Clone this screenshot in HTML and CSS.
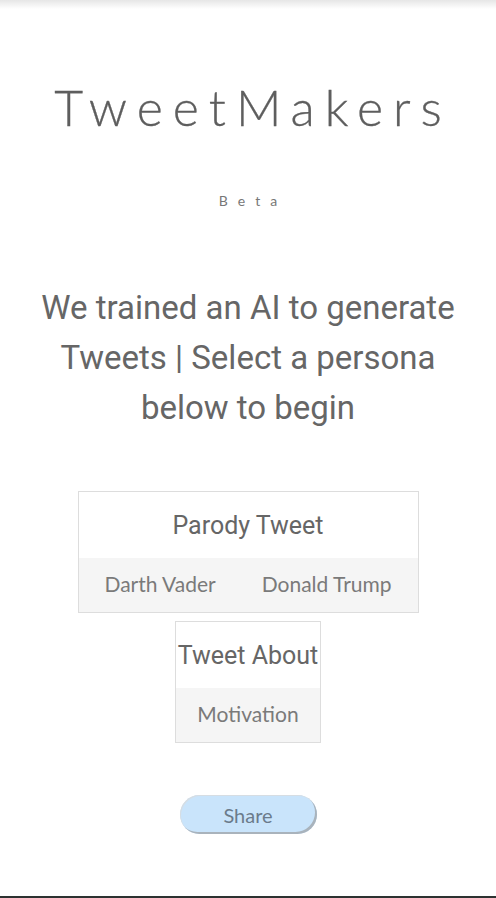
FILE: index.html
```html
<!DOCTYPE html>
<html>
<head>
<meta charset="utf-8">
<link rel="stylesheet" href="styles.css">
</head>
<body>
<div class="page">
  <div class="topshade"></div>
  <h1 class="title">TweetMakers</h1>
  <div class="beta">Beta</div>
  <p class="lead">We trained an AI to generate Tweets | Select a persona below to begin</p>
  <div class="card card-wide">
    <div class="card-head">Parody Tweet</div>
    <div class="card-row">
      <span class="opt">Darth Vader</span>
      <span class="opt">Donald Trump</span>
    </div>
  </div>
  <div class="card card-narrow">
    <div class="card-head">Tweet About</div>
    <div class="card-row">
      <span class="opt">Motivation</span>
    </div>
  </div>
  <button class="share">Share</button>
  <div class="bottombar"></div>
</div>
</body>
</html>
```
FILE: styles.css
```css
html, body {
  margin: 0;
  padding: 0;
  background: #ffffff;
}
.page {
  min-height: 898px;
  display: flex;
  flex-direction: column;
  align-items: center;
  font-family: Lato, "Liberation Sans", sans-serif;
  color: #666666;
}
.topshade {
  align-self: stretch;
  height: 9px;
  background: linear-gradient(#e6e6e6, #ffffff);
}
.title {
  margin: 68px 0 0 0;
  font-family: Lato, sans-serif;
  font-weight: 300;
  font-size: 50px;
  line-height: 60px;
  letter-spacing: 10px;
  padding-left: 10px;
  color: #5e5e5e;
  -webkit-text-stroke: 0.3px #5e5e5e;
}
.beta {
  margin-top: 54px;
  font-family: Lato, sans-serif;
  font-weight: 400;
  font-size: 14px;
  line-height: 20px;
  letter-spacing: 10px;
  padding-left: 10px;
  color: #777777;
}
.lead {
  margin: 72px 0 0 0;
  width: 470px;
  text-align: center;
  font-family: Roboto, sans-serif;
  font-size: 33px;
  line-height: 50px;
  color: #666666;
}
.card {
  border: 1px solid #dddddd;
  display: flex;
  flex-direction: column;
}
.card-wide {
  margin-top: 58px;
  width: 339px;
}
.card-narrow {
  margin-top: 8px;
}
.card-head {
  height: 66px;
  display: flex;
  align-items: center;
  justify-content: center;
  font-family: Roboto, sans-serif;
  font-size: 25px;
  color: #666666;
  padding: 0 2px;
}
.card-row {
  height: 54px;
  background: #f5f5f5;
  display: flex;
  align-items: center;
  justify-content: center;
  gap: 46px;
  padding-bottom: 3px;
  box-sizing: border-box;
}
.opt {
  font-family: Lato, sans-serif;
  font-size: 21px;
  color: #7a7a7a;
}
.share {
  margin-top: 52px;
  width: 137px;
  height: 39px;
  border-radius: 20px;
  background: #c9e4fb;
  border: none;
  box-shadow: inset -2px -2px 0 #a9b3bc, inset 1px 1px 0 #d6dde3;
  font-family: Lato, sans-serif;
  font-size: 20px;
  color: #6b7b8b;
  padding: 0;
}
.bottombar {
  margin-top: auto;
  align-self: stretch;
  height: 2px;
  background: #2d3231;
}
```
